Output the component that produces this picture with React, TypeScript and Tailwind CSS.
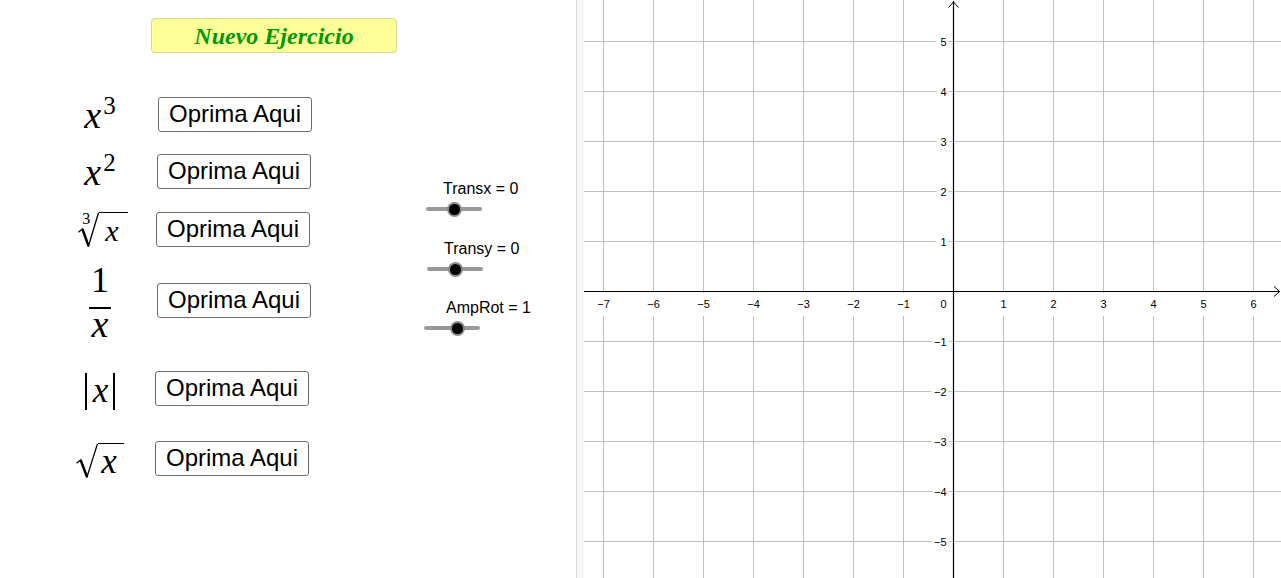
import type { ReactNode } from "react";

const serif = "font-['Liberation_Serif',serif]";

function Radical({ w, h }: { w: number; h: number }) {
  // radical sign drawn as a path; the vinculum is the border on the content
  return (
    <svg width={w} height={h} viewBox={`0 0 ${w} ${h}`} className="block shrink-0">
      <path
        d={`M0.5 ${h * 0.58} L${w * 0.22} ${h * 0.48} L${w * 0.5} ${h - 1} L${w - 0.5} 0.8`}
        fill="none"
        stroke="black"
        strokeWidth={1.3}
        strokeLinejoin="miter"
      />
      <path
        d={`M${w * 0.22} ${h * 0.5} L${w * 0.5} ${h - 1}`}
        stroke="black"
        strokeWidth={2.4}
      />
    </svg>
  );
}

function X({ size = "text-[38px]" }: { size?: string }) {
  return <span className={`${serif} italic ${size} leading-none block`}>x</span>;
}

const rows: { math: ReactNode; box: string; btn: string }[] = [
  {
    math: (
      <span className="flex items-start mt-[2px]">
        <X />
        <span className={`${serif} text-[25px] leading-none ml-[2px] -mt-[3px]`}>3</span>
      </span>
    ),
    box: "mt-[43px] h-[36px]",
    btn: "ml-[18px]",
  },
  {
    math: (
      <span className="flex items-start mt-[2px]">
        <X />
        <span className={`${serif} text-[25px] leading-none ml-[2px] -mt-[3px]`}>2</span>
      </span>
    ),
    box: "mt-[21px] h-[36px]",
    btn: "ml-[17px]",
  },
  {
    math: (
      <span className="relative flex items-start ml-[6px]">
        <Radical w={21} h={35} />
        <span className="border-t-[1.5px] border-black pl-[6px] pr-[9px] pt-[3px]">
          <X size="text-[30px]" />
        </span>
        <span className={`${serif} absolute left-[4px] top-[-1px] text-[16px] leading-none`}>3</span>
      </span>
    ),
    box: "mt-[22px] h-[36px]",
    btn: "ml-[16px]",
  },
  {
    math: (
      <span className="flex flex-col items-center mt-[5px]">
        <span className={`${serif} text-[36px] leading-none`}>1</span>
        <span className="w-[22px] h-[1.5px] bg-black mt-[9px] -mb-[3.5px]" />
        <X />
      </span>
    ),
    box: "mt-[15px] h-[76px]",
    btn: "ml-[17px]",
  },
  {
    math: (
      <span className="flex items-start mt-[7px]">
        <span className="w-[1.3px] h-[37px] bg-black" />
        <span className="pl-[6px] pr-[5px]">
          <X size="text-[35px]" />
        </span>
        <span className="w-[1.3px] h-[37px] bg-black" />
      </span>
    ),
    box: "mt-[32px] h-[36px]",
    btn: "ml-[15px]",
  },
  {
    math: (
      <span className="flex items-start mt-[6px]">
        <Radical w={22} h={35} />
        <span className="border-t-[1.5px] border-black pl-[3px] pr-[7px]">
          <X size="text-[35px]" />
        </span>
      </span>
    ),
    box: "mt-[34px] h-[36px]",
    btn: "ml-[15px]",
  },
];

function Slider({ label, labelMl, trackMl, knob, top }: { label: string; labelMl: string; trackMl: string; knob: number; top: string }) {
  return (
    <div className={top}>
      <div className={`${labelMl} h-[18px] text-[16px] leading-[18px] font-['Liberation_Sans',Arial,sans-serif] text-black whitespace-nowrap`}>
        {label}
      </div>
      <div className={`${trackMl} mt-[3px] relative w-[56px] h-[16px] flex items-center`}>
        <div className="w-full h-[4px] rounded-full bg-[#999999]" />
        <div
          className="absolute top-[0.5px] w-[15px] h-[15px] rounded-full bg-[#8a8a8a] flex items-center justify-center"
          style={{ left: knob - 7.5 }}
        >
          <div className="w-[11px] h-[11px] rounded-full bg-black" />
        </div>
      </div>
    </div>
  );
}

function Graph() {
  const W = 697;
  const H = 578;
  const ox = 369.5;
  const oy = 291.5;
  const xs = [-7, -6, -5, -4, -3, -2, -1, 1, 2, 3, 4, 5, 6];
  const ys = [5, 4, 3, 2, 1, -1, -2, -3, -4, -5];
  const lab = (n: number) => (n < 0 ? `\u2212${-n}` : `${n}`);
  return (
    <svg width={W} height={H} className="block shrink-0" style={{ fontFamily: "'Liberation Sans', Arial, sans-serif" }}>
      {xs.map((k) => (
        <line key={`vx${k}`} x1={ox + 50 * k} y1={0} x2={ox + 50 * k} y2={H} stroke="#c0c0c0" strokeWidth={1} />
      ))}
      {ys.map((k) => (
        <line key={`hy${k}`} x1={0} y1={oy - 50 * k} x2={W} y2={oy - 50 * k} stroke="#c0c0c0" strokeWidth={1} />
      ))}
      {xs.map((k) => (
        <g key={`lx${k}`}>
          <rect x={ox + 50 * k - 8} y={293} width={16} height={23} fill="white" />
          <text x={ox + 50 * k} y={307.5} textAnchor="middle" fontSize={11} fill="black">
            {lab(k)}
          </text>
        </g>
      ))}
      {ys.map((k) => (
        <g key={`ly${k}`}>
          <rect x={k < 0 ? ox - 22 : ox - 17} y={oy - 50 * k - 6} width={k < 0 ? 17 : 12} height={12} fill="white" />
          <text x={ox - 7} y={oy - 50 * k + 4} textAnchor="end" fontSize={11} fill="black">
            {lab(k)}
          </text>
        </g>
      ))}
      <text x={ox - 7} y={307.5} textAnchor="end" fontSize={11} fill="black">
        0
      </text>
      <line x1={0} y1={oy} x2={W - 1} y2={oy} stroke="black" strokeWidth={1.2} />
      <line x1={ox} y1={1} x2={ox} y2={H} stroke="black" strokeWidth={1.2} />
      <path d={`M${W - 7} ${oy - 5} L${W - 1.5} ${oy} L${W - 7} ${oy + 5}`} fill="none" stroke="black" strokeWidth={1} />
      <path d={`M${ox - 5} 7.5 L${ox} 2 L${ox + 5} 7.5`} fill="none" stroke="black" strokeWidth={1} />
    </svg>
  );
}

export default function App() {
  return (
    <div className="flex w-[1281px] h-[578px] overflow-hidden bg-white text-black">
      {/* left panel */}
      <div className="w-[576px] shrink-0">
        <div className="pt-[18px] pl-[151px]">
          <button className="w-[246px] h-[35px] bg-[#ffff99] border border-[#d6d68e] rounded-[4px] flex items-center justify-center">
            <span className={`${serif} font-bold italic text-[24px] leading-none text-[#009900]`}>Nuevo Ejercicio</span>
          </button>
        </div>

        <div className="flex">
          <div className="w-[320px] shrink-0">
            {rows.map((r, i) => (
              <div key={i} className={`flex items-center ${r.box}`}>
                <div className="w-[80px] ml-[60px] flex justify-center">{r.math}</div>
                <button
                  className={`${r.btn} w-[154px] h-[35px] bg-white border border-[#6f6f6f] rounded-[3px] text-[24px] leading-none font-['Liberation_Sans',Arial,sans-serif] text-black`}
                >
                  Oprima Aqui
                </button>
              </div>
            ))}
          </div>

          <div className="ml-[104px]">
            <Slider label="Transx = 0" labelMl="ml-[19px]" trackMl="ml-[2px]" knob={28} top="mt-[127px]" />
            <Slider label="Transy = 0" labelMl="ml-[20px]" trackMl="ml-[3px]" knob={28} top="mt-[23px]" />
            <Slider label="AmpRot = 1" labelMl="ml-[22px]" trackMl="ml-0" knob={33} top="mt-[22px]" />
          </div>
        </div>
      </div>

      {/* splitter */}
      <div className="w-[8px] shrink-0 border-l border-[#dcdcdc] bg-[#f6f6f6]" />

      <Graph />
    </div>
  );
}
